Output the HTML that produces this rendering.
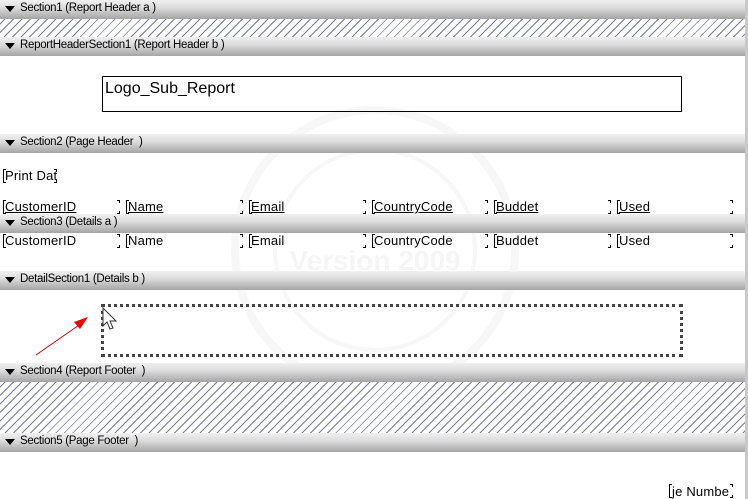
<!DOCTYPE html>
<html><head><meta charset="utf-8"><style>
*{margin:0;padding:0;box-sizing:border-box}
body{width:748px;height:499px;overflow:hidden;background:#fff;position:relative;font-family:"Liberation Sans",sans-serif}
.bar{position:absolute;left:0;width:745px;height:19px;background:linear-gradient(#f0f0f0,#dcdcdc 40%,#a5a5a5);font-size:11.5px;color:#000;line-height:17px;padding-left:20px;letter-spacing:-0.3px}
.bar:before{content:"";position:absolute;left:5px;top:6px;border-left:5px solid transparent;border-right:5px solid transparent;border-top:6px solid #000}
.hatch{position:absolute;left:0;width:745px;background:repeating-linear-gradient(135deg,#fff 0 3px,#7a7a98 3px 4px,#fff 4px 6px)}
.f{position:absolute;font-size:13px;color:#000;line-height:15px;letter-spacing:0.2px}
.u{text-decoration:underline}
</style></head><body>
<div style="position:absolute;left:745px;top:0;width:3px;height:499px;background:#c8c8c8"></div>
<svg style="position:absolute;left:225px;top:100px" width="300" height="300"><g fill="none" stroke="#f7f7f7" stroke-width="8"><circle cx="150" cy="150" r="140"/><circle cx="150" cy="150" r="100" stroke-width="4"/></g><text x="150" y="170" text-anchor="middle" font-family="Liberation Sans" font-size="28" font-weight="bold" fill="#f5f5f5">Version 2009</text></svg>

<div class="bar" style="top:0">Section1 (Report Header a )</div>
<div class="hatch" style="top:19px;height:18px"></div>
<div class="bar" style="top:37px">ReportHeaderSection1 (Report Header b )</div>
<div style="position:absolute;left:102px;top:76px;width:580px;height:36px;border:1px solid #000"></div>
<div class="f" style="left:105px;top:80px;font-size:16px;line-height:18px;letter-spacing:0">Logo_Sub_Report</div>
<div class="bar" style="top:134px">Section2 (Page Header &nbsp;)</div>
<div class="bar" style="top:214px">Section3 (Details a )</div>
<div class="bar" style="top:271px">DetailSection1 (Details b )</div>
<div style="position:absolute;left:101px;top:304px;width:582px;height:53px;border:3px dotted #444"></div>
<svg style="position:absolute;left:30px;top:305px" width="90" height="55"><line x1="6" y1="50" x2="52" y2="18" stroke="#c00" stroke-width="1"/><polygon points="58,12 44,17 50,24" fill="#e00"/><path d="M73,3 L73,21 L77,17 L80,24 L83,23 L80,16 L86,16 Z" fill="#fff" stroke="#333" stroke-width="1"/></svg>
<div class="bar" style="top:363px">Section4 (Report Footer &nbsp;)</div>
<div class="hatch" style="top:382px;height:51px"></div>
<div class="bar" style="top:433px">Section5 (Page Footer &nbsp;)</div>

<div id="rows"></div>
<script>
function lb(x,y){return '<div style="position:absolute;left:'+x+'px;top:'+y+'px;width:3px;height:1px;background:#000"></div><div style="position:absolute;left:'+x+'px;top:'+y+'px;width:1px;height:14px;background:#000"></div><div style="position:absolute;left:'+x+'px;top:'+(y+13)+'px;width:3px;height:1px;background:#000"></div>';}
function rb(e,y){return '<div style="position:absolute;left:'+(e-2)+'px;top:'+y+'px;width:3px;height:1px;background:#000"></div><div style="position:absolute;left:'+e+'px;top:'+y+'px;width:1px;height:3px;background:#000"></div><div style="position:absolute;left:'+e+'px;top:'+(y+11)+'px;width:1px;height:3px;background:#000"></div><div style="position:absolute;left:'+(e-2)+'px;top:'+(y+13)+'px;width:3px;height:1px;background:#000"></div>';}
var cols=[[4,"CustomerID"],[127,"Name"],[250,"Email"],[373,"CountryCode"],[495,"Buddet"],[618,"Used"]];
var ends=[119,242,365,487,610,732];
var h="";
[[199,true],[233,false]].forEach(function(r){
cols.forEach(function(c,i){
h+='<div class="f'+(r[1]?' u':'')+'" style="left:'+(c[0]+1)+'px;top:'+r[0]+'px">'+c[1]+'</div>';
h+=lb(c[0]-1,r[0]+1)+rb(ends[i],r[0]+1);
});});
h+='<div class="f" style="left:5px;top:168px">Print Dat</div>'+lb(3,169)+rb(56,169);
h+='<div class="f" style="left:672px;top:484px">je Numbe</div>'+lb(669,484)+rb(732,484);
document.getElementById("rows").innerHTML=h;
</script>
</body></html>
